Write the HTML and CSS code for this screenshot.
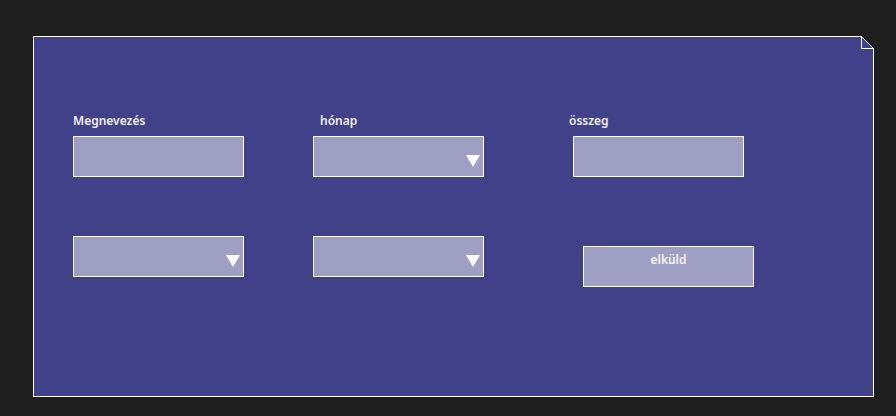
FILE: index.html
```html
<!DOCTYPE html>
<html>
<head>
<meta charset="utf-8">
<link rel="stylesheet" href="styles.css">
</head>
<body>
<div class="panel">
  <svg class="fold" width="13" height="13" viewBox="0 0 13 13">
    <polygon points="0,0 13,0 13,13" fill="#1e1e1e"/>
    <path d="M0.5 0 V12.5 H13" fill="none" stroke="#ffffff" stroke-width="1"/>
    <path d="M0.5 0.5 L12.5 12.5" fill="none" stroke="#ffffff" stroke-width="1"/>
  </svg>
  <div class="row row-top">
    <div class="field f1">
      <div class="label">Megnevezés</div>
      <div class="box"></div>
    </div>
    <div class="field f2">
      <div class="label l2">hónap</div>
      <div class="box select"><span class="arrow"></span></div>
    </div>
    <div class="field f3">
      <div class="label l3">összeg</div>
      <div class="box"></div>
    </div>
  </div>
  <div class="row row-bottom">
    <div class="field f1">
      <div class="box select"><span class="arrow"></span></div>
    </div>
    <div class="field f2">
      <div class="box select"><span class="arrow"></span></div>
    </div>
    <div class="field f4">
      <div class="box button">elküld</div>
    </div>
  </div>
</div>
</body>
</html>
```
FILE: styles.css
```css
html, body {
  margin: 0;
  padding: 0;
  background: #1e1e1e;
  font-family: "Noto Sans", "Open Sans", sans-serif;
}
body {
  padding: 36px 0 0 33px;
  height: 416px;
  box-sizing: border-box;
}
.panel {
  position: relative;
  width: 841px;
  height: 361px;
  box-sizing: border-box;
  border: 1px solid #ffffff;
  background: #41418a;
  padding: 73px 0 0 39px;
}
.fold {
  position: absolute;
  top: -1px;
  right: -1px;
  display: block;
}
.row {
  display: flex;
  align-items: flex-start;
}
.row-bottom {
  margin-top: 59px;
}
.field {
  display: flex;
  flex-direction: column;
}
.f2 { margin-left: 69px; }
.f3 { margin-left: 89px; }
.f4 { margin-left: 99px; margin-top: 10px; }
.label {
  color: #f0f0f8;
  font-size: 12px;
  font-weight: 600;
  line-height: 16px;
  height: 16px;
  padding-top: 3px;
  margin-bottom: 7px;
}
.l2 { margin-left: 7px; }
.l3 { margin-left: -4px; }
.box {
  width: 171px;
  height: 41px;
  box-sizing: border-box;
  border: 1px solid #ffffff;
  background: #9f9fc4;
}
.select {
  display: flex;
  justify-content: flex-end;
  align-items: flex-end;
  padding: 0 3px 9px 0;
}
.arrow {
  width: 0;
  height: 0;
  border-left: 7px solid transparent;
  border-right: 7px solid transparent;
  border-top: 12px solid #ffffff;
}
.button {
  color: #f4f4fa;
  font-size: 12px;
  font-weight: 600;
  line-height: 16px;
  text-align: center;
  padding-top: 5px;
}
```
